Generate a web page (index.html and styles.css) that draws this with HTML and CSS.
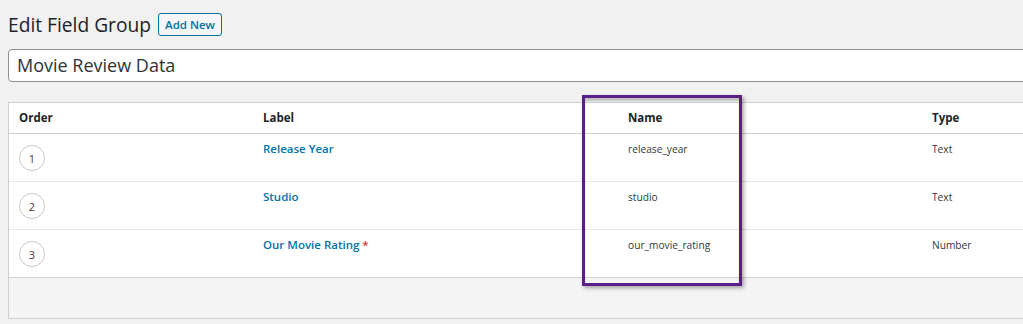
FILE: index.html
```html
<!DOCTYPE html>
<html>
<head>
<meta charset="utf-8">
<link rel="stylesheet" href="styles.css">
</head>
<body>
<div class="wrap">
  <div class="header">
    <h1 class="title">Edit Field Group</h1>
    <span class="btn">Add New</span>
  </div>
  <div class="title-input">Movie Review Data</div>
  <div class="fields">
    <div class="row head">
      <div class="cell">Order</div>
      <div class="cell">Label</div>
      <div class="cell">Name</div>
      <div class="cell">Type</div>
    </div>
    <div class="row">
      <div class="cell order"><span class="circle">1</span></div>
      <div class="cell label"><a>Release Year</a></div>
      <div class="cell name">release_year</div>
      <div class="cell type">Text</div>
    </div>
    <div class="row">
      <div class="cell order"><span class="circle">2</span></div>
      <div class="cell label"><a>Studio</a></div>
      <div class="cell name">studio</div>
      <div class="cell type">Text</div>
    </div>
    <div class="row last">
      <div class="cell order"><span class="circle">3</span></div>
      <div class="cell label"><a>Our Movie Rating</a> <span class="req">*</span></div>
      <div class="cell name">our_movie_rating</div>
      <div class="cell type">Number</div>
    </div>
    <div class="footer"><div class="footer-inner"></div></div>
  </div>
  <div class="highlight"></div>
</div>
</body>
</html>
```
FILE: styles.css
```css
html, body {
  margin: 0;
  padding: 0;
}
body {
  background: #f1f1f1;
  font-family: "Open Sans", "Noto Sans", sans-serif;
  color: #1d2327;
  overflow: hidden;
  width: 1023px;
  height: 324px;
}
.wrap {
  position: relative;
  box-sizing: border-box;
  width: 1023px;
  height: 324px;
  padding-left: 8px;
  overflow: hidden;
}
.header {
  display: flex;
  align-items: center;
  gap: 7px;
  padding-top: 13px;
  height: 23px;
}
.title {
  margin: 0;
  font-size: 19.2px;
  font-weight: 400;
  line-height: 23px;
  color: #1d2327;
}
.btn {
  box-sizing: border-box;
  height: 23px;
  width: 64px;
  display: flex;
  align-items: center;
  justify-content: center;
  border: 1px solid #0071a1;
  border-radius: 3px;
  background: #f3f5f6;
  color: #0071a1;
  font-size: 11.5px;
  font-weight: 600;
}
.title-input {
  box-sizing: border-box;
  margin-top: 13px;
  margin-right: -20px;
  height: 33px;
  border: 1px solid #8c8f94;
  border-radius: 4px;
  background: #fff;
  padding-left: 8px;
  font-size: 18px;
  line-height: 31px;
  color: #2c3338;
}
.fields {
  margin-top: 20px;
  margin-right: -20px;
  border: 1px solid #ccd0d4;
  background: #fff;
}
.row {
  display: grid;
  grid-template-columns: 244px 365px 304px 1fr;
  height: 47px;
  border-bottom: 1px solid #e8e8e8;
}
.row.head {
  height: 30px;
  border-bottom: 1px solid #ccd0d4;
}
.row.last {
  border-bottom: 1px solid #d4d4d4;
}
.cell {
  padding-left: 10px;
  font-size: 11.5px;
}
.head .cell {
  font-weight: 700;
  line-height: 30px;
  font-size: 11.5px;
  color: #1d2327;
}
.order {
  padding-top: 11px;
}
.circle {
  box-sizing: border-box;
  display: flex;
  align-items: center;
  justify-content: center;
  width: 26px;
  height: 26px;
  border: 1px solid #c8c8c8;
  border-radius: 50%;
  font-size: 11px;
  line-height: 1;
  color: #50343a;
}
.label, .name, .type {
  padding-top: 5px;
  line-height: 20px;
}
.label a {
  color: #0073aa;
  font-weight: 600;
  font-size: 11.5px;
}
.req {
  color: #dc3232;
  font-weight: 600;
}
.name, .type {
  font-size: 10.2px;
  color: #32373c;
}
.footer {
  height: 40px;
  background: #f4f4f4;
  padding: 2px 0 0 3px;
  box-sizing: border-box;
}
.footer-inner {
  height: 34px;
  border-left: 1px solid #fbfbfb;
  border-bottom: 1px solid #fbfbfb;
}
.highlight {
  position: absolute;
  left: 582px;
  top: 95px;
  width: 154px;
  height: 185px;
  border: 3px solid #5c1d8c;
  box-shadow: 2px 2px 4px rgba(0, 0, 0, 0.35), inset 0 3px 2px rgba(0, 0, 0, 0.2);
}
```
